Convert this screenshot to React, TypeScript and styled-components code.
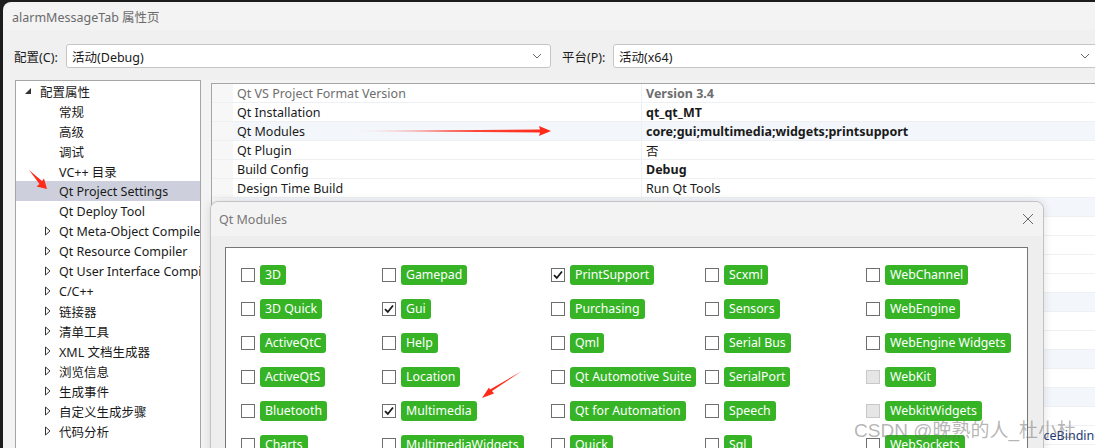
import styled, { createGlobalStyle } from "styled-components";

const GlobalStyle = createGlobalStyle`
  html, body {
    margin: 0;
    padding: 0;
    background: #1c1c1c;
    overflow: hidden;
  }
  body {
    font-family: "Noto Sans", "Noto Sans CJK SC", sans-serif;
    font-size: 12.5px;
    color: #1a1a1a;
  }
`;

const Window = styled.div`
    position: relative;
    margin: 2px 0 0 3px;
    height: 446px;
    background-color: #f3f3f3;
    border-top-left-radius: 8px;
    overflow: hidden;
    display: flex;
    flex-direction: column;
`;

const TitleBar = styled.div`
    height: 28px;
    display: flex;
    align-items: center;
    padding-left: 9px;
    color: #6b6b6b;
`;

const ConfigBar = styled.div`
    height: 50px;
    box-sizing: border-box;
    padding: 2px 0 0 11px;
    display: flex;
    align-items: center;
    background-color: #f0f0f0;
`;

const ConfigLabel = styled.span<{ $width: number }>`
    width: ${(p) => p.$width}px;
    flex-shrink: 0;
`;

const Select = styled.div<{ $width: number }>`
    width: ${(p) => p.$width}px;
    flex-shrink: 0;
    height: 24px;
    box-sizing: border-box;
    border: 1px solid #c6c6c6;
    border-radius: 3px;
    background: #ffffff;
    display: flex;
    align-items: center;
    justify-content: space-between;
    padding: 0 8px 0 5px;
    margin-right: 11px;
`;

const Chevron = () => (
	<svg width="10" height="6" viewBox="0 0 10 6">
		<path d="M1 1 L5 5 L9 1" fill="none" stroke="#666" strokeWidth="1" />
	</svg>
);

const Body = styled.div`
    flex: 1;
    display: flex;
    flex-direction: row;
    align-items: flex-start;
    padding-left: 12px;
    gap: 10px;
    min-height: 0;
`;

const TreePanel = styled.div`
    width: 186px;
    height: 400px;
    flex-shrink: 0;
    box-sizing: border-box;
    border: 1px solid #a6a6a6;
    background: #ffffff;
    display: flex;
    flex-direction: column;
`;

const TreeRow = styled.div<{ $indent: number; $selected?: boolean }>`
    height: 20px;
    flex-shrink: 0;
    display: flex;
    align-items: center;
    white-space: nowrap;
    overflow: hidden;
    padding-left: ${(p) => p.$indent}px;
    background: ${(p) => (p.$selected ? "#cdd0dc" : "transparent")};
`;

const Expander = styled.span<{ $nudge: number }>`
    width: 16px;
    flex-shrink: 0;
    box-sizing: border-box;
    padding-left: ${(p) => p.$nudge}px;
    display: inline-flex;
    align-items: center;
`;

const Grid = styled.div`
    flex: 1;
    margin-top: 3px;
    height: 400px;
    box-sizing: border-box;
    border-left: 1px solid #a6a6a6;
    border-top: 1px solid #a6a6a6;
    background: #ffffff;
    display: flex;
    flex-direction: column;
`;

const GridRow = styled.div<{ $tint?: boolean }>`
    height: 19px;
    flex-shrink: 0;
    display: grid;
    grid-template-columns: 21px 409px 1fr;
    background: ${(p) => (p.$tint ? "#f3f6fb" : "#ffffff")};
    border-bottom: 1px solid #eef0f3;
    box-sizing: border-box;
`;

const Gutter = styled.div`
    background: #f7f7f7;
`;

const Cell = styled.div<{ $muted?: boolean; $bold?: boolean; $divider?: boolean; $indent?: number; $link?: boolean }>`
    display: flex;
    align-items: center;
    padding-left: ${(p) => p.$indent ?? 4}px;
    white-space: nowrap;
    overflow: hidden;
    color: ${(p) => (p.$link ? "#1e3a78" : p.$muted ? "#6d6d6d" : "#1a1a1a")};
    font-weight: ${(p) => (p.$bold ? 700 : 400)};
    border-right: ${(p) => (p.$divider ? "1px solid #eef0f3" : "none")};
`;

const Modal = styled.div`
    position: absolute;
    left: 207px;
    top: 199px;
    width: 834px;
    height: 270px;
    box-sizing: border-box;
    border: 1px solid #c3c3c3;
    border-radius: 8px 8px 0 0;
    background: #eeeeee;
    box-shadow: 0 0 10px rgba(0, 0, 0, 0.12);
    display: flex;
    flex-direction: column;
`;

const ModalHeader = styled.div`
    height: 34px;
    flex-shrink: 0;
    display: flex;
    align-items: center;
    justify-content: space-between;
    padding: 0 9px 0 8px;
    background: #f3f3f3;
    border-radius: 8px 8px 0 0;
    color: #777777;
`;

const ModalBox = styled.div`
    margin: 11px 0 0 14px;
    width: 803px;
    flex: 1;
    box-sizing: border-box;
    border: 1px solid #767676;
    border-bottom: none;
    background: #ffffff;
    padding: 17px 0 0 15px;
`;

const ModuleGrid = styled.div`
    display: grid;
    grid-template-columns: 141px 169px 154px 161px 1fr;
    grid-auto-flow: column;
    grid-template-rows: repeat(6, 20px);
    row-gap: 14px;
`;

const ModuleItem = styled.div`
    display: flex;
    align-items: center;
    gap: 5px;
`;

const CheckBox = styled.span<{ $disabled?: boolean }>`
    width: 14px;
    height: 14px;
    box-sizing: border-box;
    flex-shrink: 0;
    border: 1px solid ${(p) => (p.$disabled ? "#c8c8c8" : "#6e6e6e")};
    background: ${(p) => (p.$disabled ? "#e6e6e6" : "#ffffff")};
    display: flex;
    align-items: center;
    justify-content: center;
`;

const Tag = styled.span`
    height: 20px;
    line-height: 20px;
    padding: 0 5px;
    border-radius: 3px;
    background: #36b426;
    color: #ffffff;
    font-size: 12.3px;
    white-space: nowrap;
`;

const Watermark = styled.div`
    position: absolute;
    right: 19px;
    bottom: 6px;
    font-size: 19px;
    color: rgba(110, 110, 110, 0.5);
    font-family: "Liberation Sans", "Noto Sans CJK SC", sans-serif;
    white-space: nowrap;
`;

const Overlay = styled.svg`
    position: absolute;
    left: -3px;
    top: -2px;
    pointer-events: none;
`;

const treeItems: { label: string; level: number; expander?: "open" | "closed"; selected?: boolean }[] = [
	{ label: "配置属性", level: 0, expander: "open" },
	{ label: "常规", level: 1 },
	{ label: "高级", level: 1 },
	{ label: "调试", level: 1 },
	{ label: "VC++ 目录", level: 1 },
	{ label: "Qt Project Settings", level: 1, selected: true },
	{ label: "Qt Deploy Tool", level: 1 },
	{ label: "Qt Meta-Object Compiler", level: 1, expander: "closed" },
	{ label: "Qt Resource Compiler", level: 1, expander: "closed" },
	{ label: "Qt User Interface Compiler", level: 1, expander: "closed" },
	{ label: "C/C++", level: 1, expander: "closed" },
	{ label: "链接器", level: 1, expander: "closed" },
	{ label: "清单工具", level: 1, expander: "closed" },
	{ label: "XML 文档生成器", level: 1, expander: "closed" },
	{ label: "浏览信息", level: 1, expander: "closed" },
	{ label: "生成事件", level: 1, expander: "closed" },
	{ label: "自定义生成步骤", level: 1, expander: "closed" },
	{ label: "代码分析", level: 1, expander: "closed" },
];

const props: { name: string; value: string; bold?: boolean; muted?: boolean; tint?: boolean; indent?: number }[] = [
	{ name: "Qt VS Project Format Version", value: "Version 3.4", bold: true, muted: true },
	{ name: "Qt Installation", value: "qt_qt_MT", bold: true },
	{ name: "Qt Modules", value: "core;gui;multimedia;widgets;printsupport", bold: true, tint: true },
	{ name: "Qt Plugin", value: "否" },
	{ name: "Build Config", value: "Debug", bold: true },
	{ name: "Design Time Build", value: "Run Qt Tools" },
	{ name: "", value: "", tint: true },
	{ name: "", value: "" },
	{ name: "", value: "" },
	{ name: "", value: "" },
	{ name: "", value: "" },
	{ name: "", value: "", tint: true },
	{ name: "", value: "" },
	{ name: "", value: "" },
	{ name: "", value: "", tint: true },
	{ name: "", value: "" },
	{ name: "", value: "", tint: true },
	{ name: "", value: "" },
	{ name: "", value: "DeviceBinding", indent: 376 },
];

type Mod = { name: string; checked?: boolean; disabled?: boolean };

const modules: Mod[] = [
	{ name: "3D" }, { name: "3D Quick" }, { name: "ActiveQtC" }, { name: "ActiveQtS" }, { name: "Bluetooth" }, { name: "Charts" },
	{ name: "Gamepad" }, { name: "Gui", checked: true }, { name: "Help" }, { name: "Location" }, { name: "Multimedia", checked: true }, { name: "MultimediaWidgets" },
	{ name: "PrintSupport", checked: true }, { name: "Purchasing" }, { name: "Qml" }, { name: "Qt Automotive Suite" }, { name: "Qt for Automation" }, { name: "Quick" },
	{ name: "Scxml" }, { name: "Sensors" }, { name: "Serial Bus" }, { name: "SerialPort" }, { name: "Speech" }, { name: "Sql" },
	{ name: "WebChannel" }, { name: "WebEngine" }, { name: "WebEngine Widgets" }, { name: "WebKit", disabled: true }, { name: "WebkitWidgets", disabled: true }, { name: "WebSockets" },
];

function ExpanderIcon({ kind }: { kind?: "open" | "closed" }) {
	if (kind === "open") {
		return (
			<svg width="8" height="8" viewBox="0 0 8 8">
				<path d="M7 1 L7 7 L1 7 Z" fill="#333" />
			</svg>
		);
	}
	if (kind === "closed") {
		return (
			<svg width="8" height="10" viewBox="0 0 8 10">
				<path d="M1.5 1 L6 5 L1.5 9 Z" fill="none" stroke="#333" strokeWidth="1" />
			</svg>
		);
	}
	return null;
}

function Check() {
	return (
		<svg width="10" height="10" viewBox="0 0 10 10">
			<path d="M1 5.2 L3.8 8 L9 1.5" fill="none" stroke="#1a1a1a" strokeWidth="1.8" />
		</svg>
	);
}

// red annotation arrows drawn over the screenshot
function Arrows() {
	return (
		<Overlay width="1095" height="448" viewBox="0 0 1095 448">
			<defs>
				<linearGradient id="tail" x1="350" y1="0" x2="545" y2="0" gradientUnits="userSpaceOnUse">
					<stop offset="0" stopColor="#ff2a1a" stopOpacity="0" />
					<stop offset="0.5" stopColor="#ff2a1a" stopOpacity="0.8" />
					<stop offset="1" stopColor="#ff2a1a" />
				</linearGradient>
			</defs>
			<path d="M350 131 L540 129.6 L539 126 L551 131 L539 136 L540 132.4 Z" fill="url(#tail)" />
			<path d="M29 170 L42 181 L44 178.5 L47 189 L36.5 186.5 L39.5 184 Z" fill="#ff2a1a" />
			<path d="M522 371 L492 391 L494 393.5 L482 398 L489 387.5 L490 389.5 Z" fill="#ff2a1a" />
		</Overlay>
	);
}

export default function App() {
	return (
		<>
			<GlobalStyle />
			<Window>
				<TitleBar>alarmMessageTab 属性页</TitleBar>
				<ConfigBar>
					<ConfigLabel $width={52}>配置(C):</ConfigLabel>
					<Select $width={485}>
						<span>活动(Debug)</span>
						<Chevron />
					</Select>
					<ConfigLabel $width={51}>平台(P):</ConfigLabel>
					<Select $width={486}>
						<span>活动(x64)</span>
						<Chevron />
					</Select>
				</ConfigBar>
				<Body>
					<TreePanel>
						{treeItems.map((item) => (
							<TreeRow key={item.label} $indent={item.level === 0 ? 8 : 27} $selected={item.selected}>
								<Expander $nudge={item.level === 0 ? 0 : 1}>
									<ExpanderIcon kind={item.expander} />
								</Expander>
								<span>{item.label}</span>
							</TreeRow>
						))}
					</TreePanel>
					<Grid>
						{props.map((row, i) => (
							<GridRow key={i} $tint={row.tint}>
								<Gutter />
								<Cell $muted={row.muted} $divider>{row.name}</Cell>
								<Cell $muted={row.muted} $bold={row.bold} $indent={row.indent} $link={!!row.indent}>
									{row.value}
								</Cell>
							</GridRow>
						))}
					</Grid>
				</Body>
				<Modal>
					<ModalHeader>
						<span>Qt Modules</span>
						<svg width="12" height="12" viewBox="0 0 12 12">
							<path d="M1 1 L11 11 M11 1 L1 11" stroke="#666" strokeWidth="1" />
						</svg>
					</ModalHeader>
					<ModalBox>
						<ModuleGrid>
							{modules.map((m) => (
								<ModuleItem key={m.name}>
									<CheckBox $disabled={m.disabled}>{m.checked ? <Check /> : null}</CheckBox>
									<Tag>{m.name}</Tag>
								</ModuleItem>
							))}
						</ModuleGrid>
					</ModalBox>
				</Modal>
				<Watermark>CSDN @晚熟的人_杜小杜</Watermark>
				<Arrows />
			</Window>
		</>
	);
}
